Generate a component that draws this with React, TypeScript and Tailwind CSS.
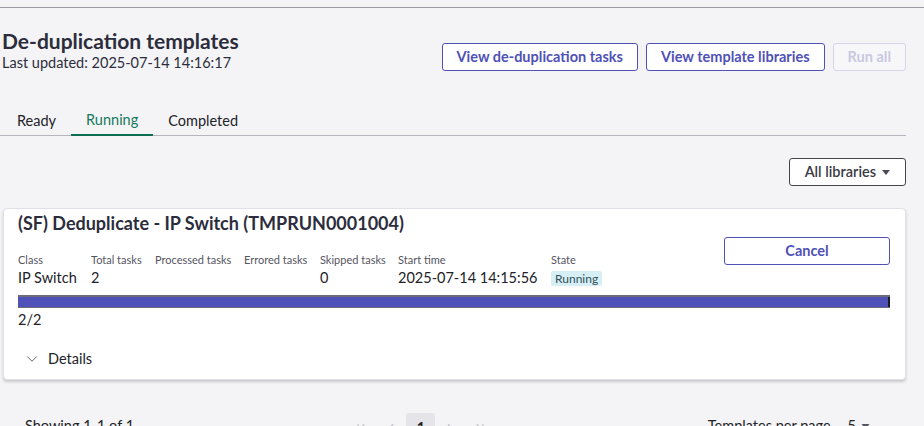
import { ChevronDown, ChevronFirst, ChevronLast, ChevronLeft, ChevronRight } from "lucide-react";

const Caret = ({ className = "" }: { className?: string }) => (
  <svg viewBox="0 0 8 5" className={className} fill="currentColor">
    <path d="M0 0h8L4 5z" />
  </svg>
);

const columns = [
  { label: "Class", value: "IP Switch", w: "w-[73px]" },
  { label: "Total tasks", value: "2", w: "w-[64px]" },
  { label: "Processed tasks", value: "", w: "w-[89px]" },
  { label: "Errored tasks", value: "", w: "w-[76px]" },
  { label: "Skipped tasks", value: "0", w: "w-[78px]" },
  { label: "Start time", value: "2025-07-14 14:15:56", w: "w-[153px]" },
];

const App = () => {
  return (
    <main className="min-h-screen bg-[#f4f4f6] font-['Lato',sans-serif] text-[#222228]">
      {/* top rule */}
      <div className="h-[8px] border-b border-[#9a9aa2]" />

      <div className="pl-[2px] pr-[18px]">
        {/* header */}
        <section className="flex items-start justify-between pt-[20px]">
          <div>
            <h1 className="text-[21px] font-bold leading-[26px] text-[#2c2d3c]">De-duplication templates</h1>
            <p className="text-[14.5px] leading-[18px] text-[#2c2d3c]">Last updated: 2025-07-14 14:16:17</p>
          </div>
          <div className="mt-[15px] flex gap-2">
            <button className="h-[28px] rounded-[3px] border border-[#4f51b6] bg-white px-[14px] text-[14.5px] font-bold text-[#4f51b6]">
              View de-duplication tasks
            </button>
            <button className="h-[28px] rounded-[3px] border border-[#4f51b6] bg-white px-[14px] text-[14.5px] font-bold text-[#4f51b6]">
              View template libraries
            </button>
            <button className="h-[28px] rounded-[3px] border border-[#d6d6ea] bg-[#f7f7fa] px-[14px] text-[14.5px] font-bold text-[#c9c9e0]">
              Run all
            </button>
          </div>
        </section>

        {/* tabs */}
        <nav className="-ml-[2px] mt-[38px] flex border-b border-[#b6b6be] pl-[2px] text-[14.5px] leading-[20px]">
          <button className="px-[15px] pb-[4px]">Ready</button>
          <button className="-mb-px border-b-2 border-[#0c6e51] px-[15px] pb-[4px] text-[#16795c]">Running</button>
          <button className="px-[15px] pb-[4px]">Completed</button>
        </nav>

        {/* filter */}
        <div className="mt-[22px] flex justify-end">
          <button className="flex h-[28px] items-center gap-[6px] rounded-[3px] border border-[#45454f] bg-white px-[15px] text-[14.5px] font-semibold text-[#3a3a46]">
            All libraries
            <Caret className="h-[5px] w-[8px] text-[#4a4a55]" />
          </button>
        </div>

        {/* template card */}
        <section className="ml-[1px] mt-[22px] rounded-[4px] border border-[#e0e0e6] bg-white pb-[10px] pl-[14px] pr-[15px] pt-[2px] shadow-[0_2px_3px_rgba(0,0,0,0.18)]">
          <h2 className="text-[18px] font-bold leading-[24px] text-[#2c2d3c]">(SF) Deduplicate - IP Switch (TMPRUN0001004)</h2>

          <div className="mt-[2px] flex h-[51px] items-start justify-between">
            <div className="flex pt-[15px]">
              {columns.map((c) => (
                <div key={c.label} className={c.w}>
                  <div className="text-[11px] leading-[16px] text-[#55555f]">{c.label}</div>
                  <div className="h-[20px] text-[14.5px] leading-[20px]">{c.value}</div>
                </div>
              ))}
              <div className="flex flex-col items-start">
                <div className="text-[11px] leading-[16px] text-[#55555f]">State</div>
                <span className="mt-[3px] h-[15px] rounded-[2px] bg-[#d5eff5] px-[4px] text-[12px] leading-[15px] text-[#34505a]">
                  Running
                </span>
              </div>
            </div>
            <button className="h-[28px] w-[166px] rounded-[3px] border border-[#4f51b6] bg-white text-[14.5px] font-bold text-[#4f51b6]">
              Cancel
            </button>
          </div>

          {/* progress */}
          <div className="mt-[7px] flex h-[13px] border-b border-t-2 border-[#6c6c78] bg-[#4f52b8]">
            <div className="ml-auto h-full w-[2px] bg-[#1a1a24]" />
          </div>
          <div className="mt-[2px] text-[14.5px] leading-[20px]">2/2</div>

          <div className="mt-[19px] flex items-center gap-[7px] pl-[5px] text-[14.5px] leading-[20px]">
            <ChevronDown size={18} strokeWidth={1.2} className="text-[#555560]" />
            <span>Details</span>
          </div>
        </section>

        {/* footer */}
        <footer className="mt-[33px] flex h-[30px] items-start justify-between pl-[23px] pr-[36px] text-[14.5px] leading-[20px]">
          <span className="mt-[3px]">Showing 1-1 of 1</span>
          <div className="flex items-center text-[#c2c2ca]">
            <span className="flex h-[30px] w-[30px] items-center justify-center"><ChevronFirst size={14} /></span>
            <span className="flex h-[30px] w-[30px] items-center justify-center"><ChevronLeft size={14} /></span>
            <span className="flex h-[30px] w-[29px] items-center justify-center rounded-[3px] bg-[#e4e4e9] font-bold text-[#222]">1</span>
            <span className="flex h-[30px] w-[30px] items-center justify-center"><ChevronRight size={14} /></span>
            <span className="flex h-[30px] w-[30px] items-center justify-center"><ChevronLast size={14} /></span>
          </div>
          <div className="mt-[3px] flex items-center">
            <span>Templates per page</span>
            <span className="ml-[17px] flex items-center gap-[5px]">
              5
              <Caret className="h-[5px] w-[9px] text-[#55555f]" />
            </span>
          </div>
        </footer>
      </div>
    </main>
  );
};

export default App;
